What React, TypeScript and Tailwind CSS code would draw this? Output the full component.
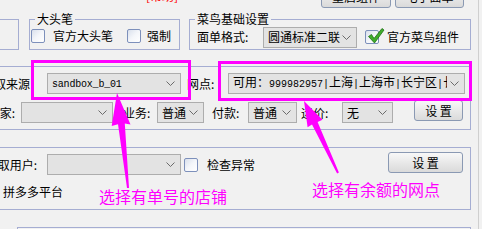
import React from "react";

const CJK = '"Noto Sans CJK SC", "Noto Sans", sans-serif';
const MONO = '"Liberation Mono", "DejaVu Sans Mono", monospace';

function Chevron() {
  return (
    <svg width="9" height="5" viewBox="0 0 9 5" className="shrink-0">
      <polyline points="0.5,0.5 4.5,4.5 8.5,0.5" fill="none" stroke="#6b6b6b" strokeWidth="1" />
    </svg>
  );
}

function Combo({ w, children }: { w: string; children?: React.ReactNode }) {
  return (
    <div className={`${w} h-[21px] shrink-0 flex items-center border border-[#adadad] bg-[#e3e3e3] pl-[4px] pr-[5px]`}>
      <div className="flex-1 overflow-hidden whitespace-nowrap text-[12px] leading-[14px]">{children}</div>
      <Chevron />
    </div>
  );
}

function Check({ checked }: { checked?: boolean }) {
  return (
    <div className="relative w-[14px] h-[14px] shrink-0 rounded-[2px] border border-[#7d90bb] bg-linear-to-br from-[#d9e0ec] via-[#f4f6fa] to-white">
      {checked && (
        <svg className="absolute left-[1px] top-[-4px]" width="18" height="18" viewBox="0 0 18 18">
          <path d="M1.5 9.5 L4.5 7.5 L7 11.5 L15 1.5 L17 3 L7.5 16 Z" fill="#3fae2a" stroke="#1f6d17" strokeWidth="0.8" strokeLinejoin="round" />
        </svg>
      )}
    </div>
  );
}

function Btn({ w, h, children }: { w: string; h: string; children?: React.ReactNode }) {
  return (
    <div className={`${w} ${h} shrink-0 rounded-[3px] border border-[#8a99b3] bg-linear-to-b from-[#f8f8f8] to-[#dadada] flex items-center justify-center text-[12px] leading-[12px] text-black`}>
      {children}
    </div>
  );
}

export default function App() {
  return (
    <div className="relative w-[482px] h-[229px] overflow-hidden bg-[#f1f1f1] text-black" style={{ fontFamily: CJK }}>
      <div className="w-[479px] h-full border-r border-[#cfcfcf] flex flex-col">
        {/* top strip with cut-off buttons */}
        <div className="h-[7px] shrink-0 overflow-hidden flex items-end">
          <div className="ml-[146px] self-start -mt-[10px] text-[12px] leading-[12px] text-[#ff0000] whitespace-nowrap">[帮助]</div>
          <div className="ml-[140px]" />
          <div className="ml-auto" />
          <div className="absolute left-[321px] top-[-15px] flex gap-[4px]">
            <Btn w="w-[70px]" h="h-[23px]">重启组件</Btn>
            <Btn w="w-[69px]" h="h-[23px]">电子面单</Btn>
          </div>
        </div>

        {/* first row of group boxes */}
        <div className="mt-[6px] flex items-start shrink-0">
          <div className="-ml-[12px] mt-[6px] w-[31px] h-[31px] border border-[#a5add2] shrink-0" />
          <fieldset className="ml-[10px] w-[151px] h-[37px] border border-[#a5add2] shrink-0 min-w-0">
            <legend className="ml-[5px] px-[2px] text-[12px] leading-[12px]">大头笔</legend>
            <div className="mt-[4px] pl-[1px] h-[14px] flex items-center text-[12px] leading-[12px] whitespace-nowrap">
              <Check />
              <span className="ml-[8px]">官方大头笔</span>
              <div className="ml-[14px]">
                <Check />
              </div>
              <span className="ml-[6px]">强制</span>
            </div>
          </fieldset>
          <fieldset className="ml-[9px] w-[282px] h-[37px] border border-[#a5add2] shrink-0 min-w-0">
            <legend className="ml-[5px] px-[2px] text-[12px] leading-[12px]">菜鸟基础设置</legend>
            <div className="mt-[2px] pl-[7px] h-[20px] flex items-center text-[12px] leading-[12px] whitespace-nowrap">
              <span className="w-[54px] shrink-0">面单格式:</span>
              <div className="ml-[12px]">
                <Combo w="w-[94px]">圆通标准二联</Combo>
              </div>
              <div className="ml-[8px]">
                <Check checked />
              </div>
              <span className="ml-[8px]">官方菜鸟组件</span>
            </div>
          </fieldset>
        </div>

        {/* group 2 */}
        <div className="mt-[16px] -ml-[10px] w-[481px] h-[64px] shrink-0 border border-[#a5add2] pt-[6px] text-[12px] leading-[12px] whitespace-nowrap">
          <div className="h-[21px] flex items-center">
            <div className="w-[39px] shrink-0 flex justify-end">
              <span className="shrink-0">获取来源</span>
            </div>
            <div className="ml-[17px]">
              <Combo w="w-[134px]">
                <span style={{ fontFamily: MONO }} className="text-[10px] tracking-[-0.2px]">sandbox_b_01</span>
              </Combo>
            </div>
            <span className="ml-[6px] w-[30px] shrink-0">网点:</span>
            <div className="ml-[11px]">
              <Combo w="w-[237px]">
                <div className="w-[214px] overflow-hidden">
                  可用：<span style={{ fontFamily: MONO }} className="text-[10px]">999982957|</span>上海<span style={{ fontFamily: MONO }} className="text-[10px]">|</span>上海市<span style={{ fontFamily: MONO }} className="text-[10px]">|</span>长宁区<span style={{ fontFamily: MONO }} className="text-[10px]">|</span>长宁
                </div>
              </Combo>
            </div>
          </div>
          <div className="mt-[8px] h-[21px] flex items-center">
            <div className="w-[24px] shrink-0 flex justify-end">
              <span className="shrink-0">厂家:</span>
            </div>
            <div className="ml-[6px]">
              <Combo w="w-[92px]" />
            </div>
            <span className="ml-[10px] w-[30px] shrink-0">业务:</span>
            <div className="ml-[4px]">
              <Combo w="w-[47px]">普通</Combo>
            </div>
            <span className="ml-[8px] w-[30px] shrink-0">付款:</span>
            <div className="ml-[6px]">
              <Combo w="w-[49px]">普通</Combo>
            </div>
            <span className="ml-[4px] w-[34px] shrink-0">运价:</span>
            <div className="ml-[7px]">
              <Combo w="w-[51px]">无</Combo>
            </div>
            <div className="ml-auto mr-[7px] self-start -mt-[2px]">
              <Btn w="w-[49px]" h="h-[21px]">设 置</Btn>
            </div>
          </div>
        </div>

        {/* group 3 */}
        <div className="mt-[17px] -ml-[10px] w-[481px] h-[63px] shrink-0 border border-[#a5add2] pt-[6px] text-[12px] leading-[12px] whitespace-nowrap">
          <div className="h-[21px] flex items-center">
            <div className="w-[46px] shrink-0 flex justify-end">
              <span className="shrink-0">获取用户:</span>
            </div>
            <div className="ml-[10px]">
              <Combo w="w-[134px]" />
            </div>
            <div className="ml-[3px]">
              <Check />
            </div>
            <span className="ml-[9px]">检查异常</span>
            <div className="ml-auto mr-[7px] self-start -mt-[2px]">
              <Btn w="w-[75px]" h="h-[21px]">设 置</Btn>
            </div>
          </div>
          <div className="mt-[11px] ml-[12px] h-[12px]">拼多多平台</div>
        </div>

        {/* group 4 (partially visible) */}
        <div className="mt-[17px] ml-[17px] w-[454px] h-[20px] shrink-0 border border-[#a5add2]" />
      </div>

      {/* annotations */}
      <div className="absolute left-[31px] top-[60px] w-[160px] h-[40px] border-[3px] border-[#ff00ff]" />
      <div className="absolute left-[218px] top-[61px] w-[254px] h-[40px] border-[3px] border-[#ff00ff]" />
      <svg className="absolute left-0 top-0 pointer-events-none" width="482" height="229" viewBox="0 0 482 229">
        <polygon
          points="117,93 130.5,124.5 124.8,123.5 129,188 127,188 118,124.3 111.7,126"
          fill="#ff00ff"
        />
        <polygon
          points="304,101 322.5,119.8 317.6,122 338.9,172.6 337.1,173.4 312,124.6 307.6,127.3"
          fill="#ff00ff"
        />
      </svg>
      <div className="absolute left-[99px] top-[188px] text-[16px] leading-[16px] text-[#ff00ff] whitespace-nowrap">选择有单号的店铺</div>
      <div className="absolute left-[312px] top-[181px] text-[16px] leading-[16px] text-[#ff00ff] whitespace-nowrap">选择有余额的网点</div>
    </div>
  );
}
